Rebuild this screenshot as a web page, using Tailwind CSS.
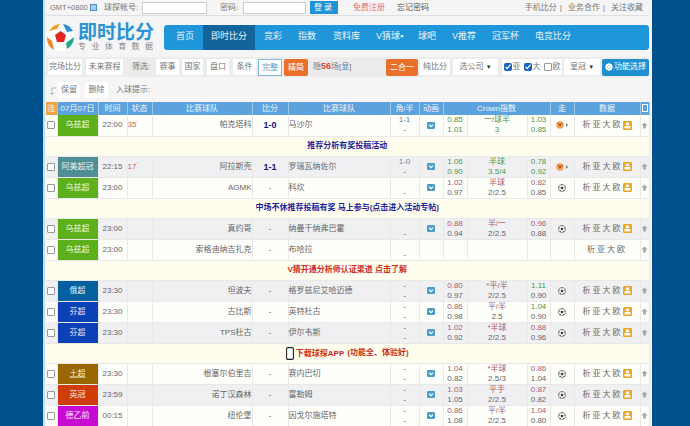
<!DOCTYPE html>
<html lang="zh-CN"><head><meta charset="utf-8"><title>即时比分</title>
<script src="https://cdn.jsdelivr.net/npm/@tailwindcss/browser@4"></script></head>
<body class="w-[690px] h-[426px] overflow-hidden bg-[#02508c] font-['Liberation_Sans','Noto_Sans_CJK_SC',sans-serif] text-[8px] text-[#666]">
<svg class="hidden"><defs>
<symbol id="tv" viewBox="0 0 8 7"><rect width="8" height="7" rx="1.2" fill="#4b9cc9"/><path d="M2 2.6 4 4.6 6 2.6" fill="none" stroke="#fff" stroke-width="1.2"/></symbol>
<symbol id="ball" viewBox="0 0 8 8"><circle cx="4" cy="4" r="3.6" fill="#fff" stroke="#666" stroke-width=".7"/><path d="M4 2.4 5.5 3.5 5 5.3H3L2.5 3.5Z" fill="#444"/><path d="M4 .5V1.4M.8 3 1.7 3.4M7.2 3 6.3 3.4M2 7 2.6 6M6 7 5.4 6" stroke="#444"/></symbol>
<symbol id="live" viewBox="0 0 12 8"><circle cx="4" cy="4" r="3.7" fill="#f0a050"/><path d="M4 2.6 5.3 3.6 4.8 5.1H3.2L2.7 3.6Z" fill="#b5421c"/><circle cx="2" cy="2.4" r=".7" fill="#b5421c"/><circle cx="6" cy="2.4" r=".7" fill="#b5421c"/><path d="M10 2 12 4 10 6Z" fill="#777"/></symbol>
<symbol id="data" viewBox="0 0 9 9"><rect width="9" height="9" rx="1.2" fill="#eca42c"/><rect x="2.8" y="1.6" width="3.4" height="2.6" fill="#fff"/><rect x="1.6" y="5" width="5.8" height="2.4" fill="#fff"/></symbol>
<symbol id="up" viewBox="0 0 8 8"><path d="M4 .5 7.6 4H5.6V7.5H2.4V4H.4Z" fill="#aaa"/></symbol>
</defs></svg>
<div class="flex h-[426px]">
<div class="w-[43px] shrink-0"></div>
<main class="w-[609px] shrink-0 bg-[#f5f5f6] border-l-2 border-[#bfe0f5] overflow-hidden pl-[1px] pr-[3px]">
  <!-- top strip -->
  <div class="h-[16px] flex items-center pl-[4px] pr-[6px] border-b border-[#dcdfe3] text-[8px] text-[#777] whitespace-nowrap">
    <span class="w-[40px] shrink-0 text-[7.5px]">GMT+0800</span><span class="w-[7px] h-[7px] shrink-0 bg-[#a5cfee] border border-[#4a90c8] mr-[7px]"></span>
    <span class="w-[38px] shrink-0">球探帐号:</span><span class="w-[65px] h-[12px] shrink-0 bg-white border border-[#ccc] mr-[13px]"></span>
    <span class="w-[23px] shrink-0">密码:</span><span class="w-[63px] h-[12px] shrink-0 bg-white border border-[#ccc] mr-[4px]"></span>
    <span class="w-[28px] h-[13px] shrink-0 bg-[#1f93d6] text-white text-center leading-[13px] tracking-[2px] mr-[15px]">登录</span>
    <span class="text-[#e0765a] w-[44px] shrink-0">免费注册</span><span class="text-[#555]">忘记密码</span>
    <span class="ml-auto flex gap-[3px]"><span>手机比分</span><span>|</span><span class="ml-[3px]">业务合作</span><span>|</span><span class="ml-[3px]">关注收藏</span></span>
  </div>
  <!-- logo + nav -->
  <div class="h-[34px] mt-[4px] flex items-center">
    <svg class="w-[29px] h-[29px] shrink-0" viewBox="0 0 29 29"><circle cx="14.5" cy="14.5" r="14" fill="#fff"/><path d="M3 8A14 14 0 0 1 14 1L11 6Z" fill="#f0a030"/><path d="M17 1A14 14 0 0 1 27 8L21 9Z" fill="#2a8fd0"/><path d="M28 14A14 14 0 0 1 21 26L20 20Z" fill="#2aa58a"/><path d="M8 27A14 14 0 0 1 1 14L6 18Z" fill="#ef8b2c"/><path d="M14.5 8 20 12 18 19H11L9 12Z" fill="#e32422"/></svg>
    <div class="ml-[3px] w-[86px] shrink-0">
      <div class="text-[19px] leading-[19px] font-bold text-[#2b93d5] whitespace-nowrap">即时比分</div>
      <div class="text-[8px] leading-[10px] text-[#888] tracking-[5.4px] whitespace-nowrap">专业体育数据</div>
    </div>
    <nav class="flex-1 h-[25px] bg-[#1f96d9] rounded-[3px] flex items-center text-[9px] text-[#e8f4fb] pl-[12px]">
      <span class="w-[27px]">首页</span>
      <span class="w-[52px] h-full bg-[#12659b] flex items-center justify-center">即时比分</span>
      <span class="ml-[9px] w-[34px]">竞彩</span><span class="w-[35px]">指数</span><span class="w-[43px]">资料库</span><span class="w-[42px]">V猜球▪</span><span class="w-[34px]">球吧</span><span class="w-[40px]">V推荐</span><span class="w-[43px]">冠军杯</span><span>电竞比分</span>
    </nav>
  </div>
  <!-- toolbar -->
  <div class="mt-[3px] h-[20px] bg-[#ececec] rounded-[2px] flex items-center pl-[2px] text-[#777] whitespace-nowrap">
    <span class="w-[34px] h-[16px] bg-white text-center leading-[16px]">完场比分</span>
    <span class="ml-[4px] w-[37px] h-[16px] bg-white text-center leading-[16px]">未来赛程</span>
    <span class="ml-[9px] w-[24px]">筛选:</span>
    <span class="w-[23px] h-[16px] bg-white text-center leading-[16px]">赛事</span>
    <span class="ml-[3px] w-[21px] h-[16px] bg-white text-center leading-[16px]">国家</span>
    <span class="ml-[4px] w-[22px] h-[16px] bg-white text-center leading-[16px]">盘口</span>
    <span class="ml-[4px] w-[23px] h-[16px] bg-white text-center leading-[16px]">条件</span>
    <span class="ml-[2px] w-[24px] h-[17px] bg-white border border-[#7fbbe0] text-[#5aa5d5] text-center leading-[15px]">完整</span>
    <span class="ml-[2px] w-[24px] h-[17px] bg-[#e8702a] rounded-[2px] text-white text-center leading-[17px]">精简</span>
    <span class="ml-[5px] w-[73px]">隐<b class="text-[#d9453a] text-[9px]">56</b>场[<span class="text-[#3e7fb8]">显</span>]</span>
    <span class="w-[32px] h-[17px] bg-[#e8702a] rounded-[2px] text-white text-center leading-[17px]">二合一</span>
    <span class="ml-[2px] w-[30px] h-[16px] bg-white text-center leading-[16px]">纯比分</span>
    <span class="ml-[3px] w-[45px] h-[16px] bg-white text-center leading-[16px]">选公司 <span class="text-[6px] text-[#333]">▼</span></span>
    <span class="ml-[4px] w-[60px] h-[16px] bg-white flex items-center justify-center gap-[1px]"><input type="checkbox" checked class="w-[8px] h-[8px] m-0 accent-[#1a62c0]">亚<input type="checkbox" checked class="w-[8px] h-[8px] ml-[2px] accent-[#1a62c0]">大<input type="checkbox" class="w-[8px] h-[8px] ml-[2px] appearance-none bg-white border border-[#999] rounded-[1px]">欧</span>
    <span class="ml-[2px] w-[36px] h-[16px] bg-white text-center leading-[16px]">皇冠 <span class="text-[6px] text-[#333]">▼</span></span>
    <span class="ml-[2px] w-[47px] h-[17px] bg-[#1f8fd0] rounded-[2px] text-white flex items-center justify-center gap-[1px]"><svg class="w-[8px] h-[8px]" viewBox="0 0 8 8"><circle cx="4" cy="4" r="2.6" fill="none" stroke="#fff" stroke-width="1.8"/><path d="M4 0V8M0 4H8M1.2 1.2 6.8 6.8M6.8 1.2 1.2 6.8" stroke="#fff" stroke-width=".9"/></svg>功能选择</span>
  </div>
  <!-- second toolbar -->
  <div class="mt-[4px] h-[18px] flex items-center pl-[3px] text-[#777]">
    <svg class="w-[8px] h-[9px] mt-[3px]" viewBox="0 0 8 9"><path d="M7 1H3V8M1 6.5H5" fill="none" stroke="#bbb"/></svg>
    <span class="ml-[1px] w-[22px] h-[16px] bg-white text-center leading-[16px]">保留</span>
    <span class="ml-[5px] w-[23px] h-[16px] bg-white text-center leading-[16px]">删除</span>
    <span class="ml-[8px]">入球提示:</span>
  </div>
  <table class="mt-[3px] w-[603px] table-fixed border-collapse text-center text-[8px] leading-[10px] [&_td]:p-0 [&_td]:border-r [&_td]:border-b [&_td]:border-[#e9e9e9] [&_th]:p-0 [&_th]:font-normal [&_th]:border-r [&_th]:border-[#9cc8ea] [&_input]:appearance-none [&_input]:bg-white [&_input]:border [&_input]:border-[#999] [&_input]:rounded-[1px]">
    <colgroup><col class="w-[11px]"><col class="w-[41px]"><col class="w-[29px]"><col class="w-[25px]"><col class="w-[100px]"><col class="w-[36px]"><col class="w-[102px]"><col class="w-[29px]"><col class="w-[24px]"><col class="w-[24px]"><col class="w-[60px]"><col class="w-[23px]"><col class="w-[24px]"><col class="w-[66px]"><col class="w-[9px]"></colgroup>
    <thead><tr class="h-[13px] bg-[#5ca2dc] text-[#eef6fc]"><th class="bg-[#f2a341]">连</th><th>07月07日</th><th>时间</th><th>状态</th><th>比赛球队</th><th>比分</th><th>比赛球队</th><th>角/半</th><th>动画</th><th colspan="3">Crown指数</th><th>走</th><th>数据</th><th><span class="inline-block w-[6px] h-[8px] border border-white align-middle"></span></th></tr></thead>
    <tbody>
<tr class="h-[21px] bg-[#fefefb]"><td><input type="checkbox" class="block mx-auto w-[8px] h-[8px]"></td><td class="bg-[#5db01c] text-[#e8f5d8]">乌兹超</td><td>22:00</td><td class="text-[#c8604c] text-left pl-[4px]">35<sup class="text-[5px]">'</sup></td><td class="text-right pr-[1px]">帕克塔科</td><td class="font-bold text-[#14147a] text-[9px]">1-0</td><td class="text-left pl-[1px]">马沙尔</td><td><div class="text-[#5c8a9c]">1-1</div><div>-</div></td><td><svg class="w-[8px] h-[7px] mx-auto"><use href="#tv"/></svg></td><td class="text-[#4d9a4d]">0.85<br>1.01</td><td class="text-[#4d9a4d]">一/球半<br>3</td><td class="text-[#4d9a4d]">1.03<br>0.85</td><td><svg class="w-[12px] h-[8px] mx-auto"><use href="#live"/></svg></td><td class="tracking-[2px]">析亚大欧<svg class="inline w-[9px] h-[9px]"><use href="#data"/></svg></td><td><svg class="w-[7px] h-[7px] mx-auto"><use href="#up"/></svg></td></tr>
<tr class="h-[20px] bg-[#fffdee]"><td colspan="15" class="font-bold text-[#1f1f9c]">推荐分析有奖投稿活动</td></tr>
<tr class="h-[21px] bg-[#f0f0f2]"><td><input type="checkbox" class="block mx-auto w-[8px] h-[8px]"></td><td class="bg-[#4e8e94] text-[#e6f1f2]">阿美超冠</td><td>22:15</td><td class="text-[#c8604c] text-left pl-[4px]">17<sup class="text-[5px]">'</sup></td><td class="text-right pr-[1px]">阿拉斯壳</td><td class="font-bold text-[#14147a] text-[9px]">1-1</td><td class="text-left pl-[1px]">罗瑞瓦纳佐尔</td><td><div class="text-[#5c8a9c]">1-0</div><div>-</div></td><td><svg class="w-[8px] h-[7px] mx-auto"><use href="#tv"/></svg></td><td class="text-[#4d9a4d]">1.06<br>0.90</td><td class="text-[#4d9a4d]">半球<br>3.5/4</td><td class="text-[#4d9a4d]">0.78<br>0.92</td><td><svg class="w-[12px] h-[8px] mx-auto"><use href="#live"/></svg></td><td class="tracking-[2px]">析亚大欧<svg class="inline w-[9px] h-[9px]"><use href="#data"/></svg></td><td><svg class="w-[7px] h-[7px] mx-auto"><use href="#up"/></svg></td></tr>
<tr class="h-[21px] bg-[#fefefb]"><td><input type="checkbox" class="block mx-auto w-[8px] h-[8px]"></td><td class="bg-[#5db01c] text-[#e8f5d8]">乌兹超</td><td>23:00</td><td></td><td class="text-right pr-[1px]">AGMK</td><td>-</td><td class="text-left pl-[1px]">科坎</td><td><div>&nbsp;</div><div>-</div></td><td><svg class="w-[8px] h-[7px] mx-auto"><use href="#tv"/></svg></td><td><span class="text-[#a9606c]">1.02</span><br>0.97</td><td><span class="text-[#a9606c]">半球</span><br>2/2.5</td><td><span class="text-[#a9606c]">0.82</span><br>0.85</td><td><svg class="w-[8px] h-[8px] mx-auto"><use href="#ball"/></svg></td><td class="tracking-[2px]">析亚大欧<svg class="inline w-[9px] h-[9px]"><use href="#data"/></svg></td><td><svg class="w-[7px] h-[7px] mx-auto"><use href="#up"/></svg></td></tr>
<tr class="h-[20px] bg-[#fffdee]"><td colspan="15" class="font-bold text-[#1f1f9c]">中场不休推荐投稿有奖 马上参与(点击进入活动专帖)</td></tr>
<tr class="h-[21px] bg-[#f0f0f2]"><td><input type="checkbox" class="block mx-auto w-[8px] h-[8px]"></td><td class="bg-[#5db01c] text-[#e8f5d8]">乌兹超</td><td>23:00</td><td></td><td class="text-right pr-[1px]">真约哥</td><td>-</td><td class="text-left pl-[1px]">纳曼干纳弗巴霍</td><td><div>&nbsp;</div><div>-</div></td><td><svg class="w-[8px] h-[7px] mx-auto"><use href="#tv"/></svg></td><td><span class="text-[#a9606c]">0.88</span><br>0.94</td><td><span class="text-[#a9606c]">半/一</span><br>2/2.5</td><td><span class="text-[#a9606c]">0.96</span><br>0.88</td><td><svg class="w-[8px] h-[8px] mx-auto"><use href="#ball"/></svg></td><td class="tracking-[2px]">析亚大欧<svg class="inline w-[9px] h-[9px]"><use href="#data"/></svg></td><td><svg class="w-[7px] h-[7px] mx-auto"><use href="#up"/></svg></td></tr>
<tr class="h-[21px] bg-[#fefefb]"><td><input type="checkbox" class="block mx-auto w-[8px] h-[8px]"></td><td class="bg-[#5db01c] text-[#e8f5d8]">乌兹超</td><td>23:00</td><td></td><td class="text-right pr-[1px]">索格迪纳吉扎克</td><td>-</td><td class="text-left pl-[1px]">布哈拉</td><td><div>&nbsp;</div><div>-</div></td><td></td><td></td><td></td><td></td><td></td><td class="tracking-[2px] pr-[9px]">析亚大欧</td><td><svg class="w-[7px] h-[7px] mx-auto"><use href="#up"/></svg></td></tr>
<tr class="h-[20px] bg-[#fffdee]"><td colspan="15" class="font-bold text-[#d02a20]">V猜开通分析师认证渠道 点击了解</td></tr>
<tr class="h-[21px] bg-[#f0f0f2]"><td><input type="checkbox" class="block mx-auto w-[8px] h-[8px]"></td><td class="bg-[#04609f] text-[#e3eef6]">俄超</td><td>23:30</td><td></td><td class="text-right pr-[1px]">坦波夫</td><td>-</td><td class="text-left pl-[1px]">格罗兹尼艾哈迈德</td><td>-<br>-</td><td><svg class="w-[8px] h-[7px] mx-auto"><use href="#tv"/></svg></td><td><span class="text-[#a9606c]">0.80</span><br>0.97</td><td><span class="text-[#a9606c]">*平/半</span><br>2/2.5</td><td><span class="text-[#4d9a4d]">1.11</span><br>0.90</td><td><svg class="w-[8px] h-[8px] mx-auto"><use href="#ball"/></svg></td><td class="tracking-[2px]">析亚大欧<svg class="inline w-[9px] h-[9px]"><use href="#data"/></svg></td><td><svg class="w-[7px] h-[7px] mx-auto"><use href="#up"/></svg></td></tr>
<tr class="h-[21px] bg-[#fefefb]"><td><input type="checkbox" class="block mx-auto w-[8px] h-[8px]"></td><td class="bg-[#0b40b6] text-[#e3e9f8]">芬超</td><td>23:30</td><td></td><td class="text-right pr-[1px]">古比斯</td><td>-</td><td class="text-left pl-[1px]">英特杜古</td><td>-<br>-</td><td><svg class="w-[8px] h-[7px] mx-auto"><use href="#tv"/></svg></td><td><span class="text-[#a9606c]">0.86</span><br>0.98</td><td><span class="text-[#a9606c]">平/半</span><br>2.5</td><td><span class="text-[#4d9a4d]">1.04</span><br>0.90</td><td><svg class="w-[8px] h-[8px] mx-auto"><use href="#ball"/></svg></td><td class="tracking-[2px]">析亚大欧<svg class="inline w-[9px] h-[9px]"><use href="#data"/></svg></td><td><svg class="w-[7px] h-[7px] mx-auto"><use href="#up"/></svg></td></tr>
<tr class="h-[21px] bg-[#f0f0f2]"><td><input type="checkbox" class="block mx-auto w-[8px] h-[8px]"></td><td class="bg-[#0b40b6] text-[#e3e9f8]">芬超</td><td>23:30</td><td></td><td class="text-right pr-[1px]">TPS杜古</td><td>-</td><td class="text-left pl-[1px]">伊尔韦斯</td><td>-<br>-</td><td><svg class="w-[8px] h-[7px] mx-auto"><use href="#tv"/></svg></td><td><span class="text-[#a9606c]">1.02</span><br>0.92</td><td><span class="text-[#a9606c]">*半球</span><br>2/2.5</td><td><span class="text-[#a9606c]">0.88</span><br>0.96</td><td><svg class="w-[8px] h-[8px] mx-auto"><use href="#ball"/></svg></td><td class="tracking-[2px]">析亚大欧<svg class="inline w-[9px] h-[9px]"><use href="#data"/></svg></td><td><svg class="w-[7px] h-[7px] mx-auto"><use href="#up"/></svg></td></tr>
<tr class="h-[20px] bg-[#fffdee]"><td colspan="15" class="font-bold text-[#d02a20]"><svg class="inline w-[8px] h-[13px] mr-[2px] align-middle" viewBox="0 0 8 13"><rect x=".6" y=".6" width="6.8" height="11.8" rx="1.2" fill="#fff" stroke="#222" stroke-width="1.1"/></svg>下载球探APP <span class="ml-[1px]">(功能全、体验好)</span></td></tr>
<tr class="h-[21px] bg-[#fefefb]"><td><input type="checkbox" class="block mx-auto w-[8px] h-[8px]"></td><td class="bg-[#996600] text-[#f8eed8] underline decoration-white/50">土超</td><td>23:30</td><td></td><td class="text-right pr-[1px]">根塞尔伯里吉</td><td>-</td><td class="text-left pl-[1px]">赛内巴切</td><td>-<br>-</td><td><svg class="w-[8px] h-[7px] mx-auto"><use href="#tv"/></svg></td><td><span class="text-[#a9606c]">1.04</span><br>0.82</td><td><span class="text-[#a9606c]">*半球</span><br>2.5/3</td><td><span class="text-[#a9606c]">0.86</span><br>1.04</td><td><svg class="w-[8px] h-[8px] mx-auto"><use href="#ball"/></svg></td><td class="tracking-[2px]">析亚大欧<svg class="inline w-[9px] h-[9px]"><use href="#data"/></svg></td><td><svg class="w-[7px] h-[7px] mx-auto"><use href="#up"/></svg></td></tr>
<tr class="h-[21px] bg-[#f0f0f2]"><td><input type="checkbox" class="block mx-auto w-[8px] h-[8px]"></td><td class="bg-[#d03c0a] text-[#fbe6dc]">英冠</td><td>23:59</td><td></td><td class="text-right pr-[1px]">诺丁汉森林</td><td>-</td><td class="text-left pl-[1px]">富勒姆</td><td>-<br>-</td><td><svg class="w-[8px] h-[7px] mx-auto"><use href="#tv"/></svg></td><td><span class="text-[#a9606c]">1.03</span><br>1.05</td><td><span class="text-[#a9606c]">平手</span><br>2/2.5</td><td><span class="text-[#a9606c]">0.87</span><br>0.82</td><td><svg class="w-[8px] h-[8px] mx-auto"><use href="#ball"/></svg></td><td class="tracking-[2px]">析亚大欧<svg class="inline w-[9px] h-[9px]"><use href="#data"/></svg></td><td><svg class="w-[7px] h-[7px] mx-auto"><use href="#up"/></svg></td></tr>
<tr class="h-[21px] bg-[#fefefb]"><td><input type="checkbox" class="block mx-auto w-[8px] h-[8px]"></td><td class="bg-[#c60cd0] text-[#fbe3fc]">德乙前</td><td>00:15</td><td></td><td class="text-right pr-[1px]">纽伦堡</td><td>-</td><td class="text-left pl-[1px]">因戈尔施塔特</td><td>-<br>-</td><td><svg class="w-[8px] h-[7px] mx-auto"><use href="#tv"/></svg></td><td><span class="text-[#a9606c]">0.86</span><br>1.08</td><td><span class="text-[#a9606c]">平/半</span><br>2/2.5</td><td><span class="text-[#a9606c]">1.04</span><br>0.80</td><td><svg class="w-[8px] h-[8px] mx-auto"><use href="#ball"/></svg></td><td class="tracking-[2px]">析亚大欧<svg class="inline w-[9px] h-[9px]"><use href="#data"/></svg></td><td><svg class="w-[7px] h-[7px] mx-auto"><use href="#up"/></svg></td></tr>
    </tbody>
  </table>
</main>
<div class="flex-1"></div>
</div>
</body></html>
